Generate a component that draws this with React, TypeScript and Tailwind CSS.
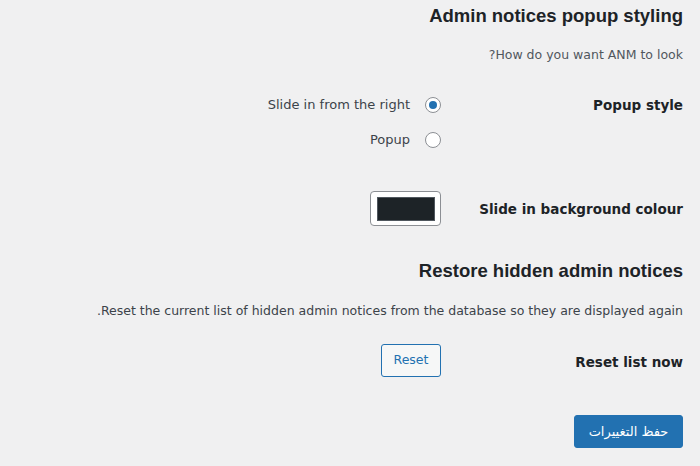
import { useState } from "react"

const bodyFont = "font-['DejaVu_Sans',sans-serif]"
const headFont = "font-['Liberation_Sans',Arial,sans-serif]"

function Radio({ checked, label, onPick }: { checked: boolean; label: string; onPick: () => void }) {
    return (
        <label className="flex h-[20px] items-center gap-[15px] cursor-pointer" onClick={onPick}>
            <span className="flex h-[16px] w-[16px] items-center justify-center rounded-full border border-[#8c8f94] bg-white">
                {checked && <span className="h-[8px] w-[8px] rounded-full bg-[#2271b1]" />}
            </span>
            <span className="text-[13px] text-[#3c434a]">{label}</span>
        </label>
    )
}

export default function App() {
    const [style, setStyle] = useState("slide")

    return (
        <div dir="rtl" className={`h-[466px] w-[700px] overflow-hidden bg-[#f0f0f1] pr-[17px] ${bodyFont}`}>
            <h2 className={`mt-[5px] text-[18.5px] leading-[22px] font-bold text-[#1d2327] ${headFont}`}>
                Admin notices popup styling
            </h2>
            <p className="mt-[19px] text-[12.5px] leading-[18px] text-[#50575e]">How do you want ANM to look?</p>

            <div className="mt-[31px] grid grid-cols-[242px_1fr]">
                <div className="h-[20px] text-[13.5px] leading-[20px] font-bold text-[#1d2327]">Popup style</div>
                <div className="flex flex-col gap-[15px]">
                    <Radio checked={style === "slide"} label="Slide in from the right" onPick={() => setStyle("slide")} />
                    <Radio checked={style === "popup"} label="Popup" onPick={() => setStyle("popup")} />
                </div>
            </div>

            <div className="mt-[41px] grid grid-cols-[242px_1fr] items-center">
                <div className="text-[13.5px] leading-[20px] font-bold text-[#1d2327]">Slide in background colour</div>
                <div className="flex">
                    <button
                        type="button"
                        className="flex h-[35px] w-[71px] items-center justify-center rounded-[4px] border border-[#8c8f94] bg-white"
                    >
                        <span className="h-[22px] w-[56px] bg-[#1d2327] outline outline-[#50575e]" />
                    </button>
                </div>
            </div>

            <h2 className={`mt-[34px] text-[18.5px] leading-[22px] font-bold text-[#1d2327] ${headFont}`}>
                Restore hidden admin notices
            </h2>
            <p className="mt-[20px] text-[12.5px] leading-[18px] text-[#3c434a]">
                Reset the current list of hidden admin notices from the database so they are displayed again.
            </p>

            <div className="mt-[24px] grid grid-cols-[242px_1fr] items-center">
                <div className="pt-[3px] text-[13.5px] leading-[20px] font-bold text-[#1d2327]">Reset list now</div>
                <div className="flex">
                    <button
                        type="button"
                        className="h-[33px] w-[60px] rounded-[3px] border border-[#2271b1] bg-[#f6f7f7] text-[12.5px] text-[#2271b1]"
                    >
                        Reset
                    </button>
                </div>
            </div>

            <button
                type="button"
                className="mt-[38px] h-[33px] w-[109px] rounded-[3px] border border-[#2271b1] bg-[#2271b1] text-[13px] text-white"
            >
                حفظ التغييرات
            </button>
        </div>
    )
}
